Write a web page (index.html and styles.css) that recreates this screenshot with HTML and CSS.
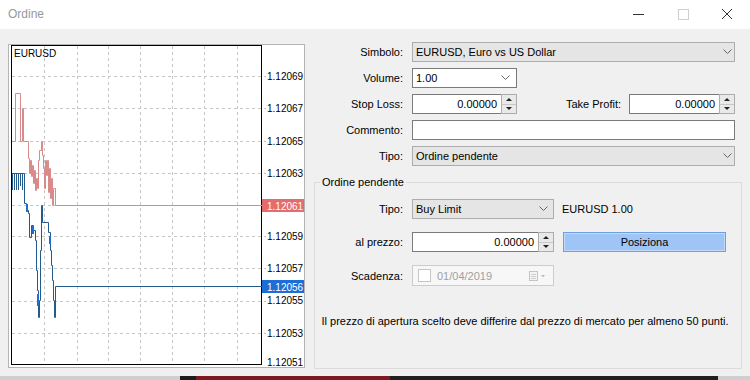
FILE: index.html
```html
<!DOCTYPE html>
<html lang="it">
<head>
  <meta charset="UTF-8">
  <title>Ordine</title>
  <link rel="stylesheet" href="styles.css">
</head>
<body>
  <div class="titlebar">
    <span class="title">Ordine</span>
    <div class="controls">
      <svg width="45" height="12" viewBox="0 0 45 12"><path d="M17 6.5H28" stroke="#333" stroke-width="1"/></svg>
      <svg width="45" height="12" viewBox="0 0 45 12"><rect x="17.5" y="1.5" width="10" height="10" fill="none" stroke="#cfcfcf"/></svg>
      <svg width="45" height="12" viewBox="0 0 45 12"><path d="M16 1L26 11M26 1L16 11" stroke="#333" stroke-width="1"/></svg>
    </div>
  </div>

  <div class="main">
    <div class="chart">
      <svg width="297" height="324" viewBox="8 44 297 324">
        <rect x="8.5" y="44.5" width="296" height="323" fill="#fff" stroke="#b4b4b4"/>
        <g stroke="#c6c6c6" stroke-dasharray="3 3" fill="none">
          <path d="M44.5 46V364M77.5 46V364M108.5 46V364M140.5 46V364M172.5 46V364M204.5 46V364M237.5 46V364"/>
          <path d="M12 76.5H266M12 108.5H266M12 141.5H266M12 173.5H266M12 205.5H266M12 236.5H266M12 268.5H266M12 301.5H266M12 333.5H266"/>
        </g>
        <rect x="11.5" y="45.5" width="250" height="319" fill="none" stroke="#000"/>
        <text x="14" y="57" class="sym">EURUSD</text>

        <!-- ask -->
        <path fill="none" stroke="#d98a8a" d="M12 141.5H15.5V93.5H20.5V141.5H22.5V108.5H23.5V141.5H28.5V158.5H29.5V173.5H30.5V160.5H31.5V176.5H32.5V165.5H33.5V183.5H34.5V170.5H35.5V190.5H36.5V178.5H37.5V188.5H38.5V160.5H39.5V150.5H41.5V141.5H42.5V155.5H43.5V168.5H44.5V188.5H45.5V160.5H46.5V175.5H47.5V160.5H48.5V192.5H49.5V168.5H50.5V198.5H51.5V178.5H52.5V205.5H53.5V188.5H55.5V205.5H262"/>
        <!-- bid -->
        <path fill="none" stroke="#235c8c" d="M12 173.5H24.5M12.5 173V190M14.5 173V190M16.5 173V190M18.5 173V190M20.5 173V186M22.5 173V190M24.5 173.5V203.5H26.5V210.5H28.5V213.5H29.5V237.5H31.5V225.5H33.5V230.5H35.5V240.5H36.5V270.5H37.5V290.5H38.5V317.5H39.5V300.5H40.5V250.5H41.5V205.5H42.5V222.5H48.5V232.5H50.5V250.5H51.5V265.5H52.5V280.5H53.5V300.5H54.5V317.5H55.5V286.5H262"/>
        <path fill="none" stroke="#1f6fd0" stroke-width="2" d="M27 204V212M33 226V234M38 294V306M50 236V244"/>

        <g class="axis">
          <text x="267" y="80">1.12069</text>
          <text x="267" y="112">1.12067</text>
          <text x="267" y="145">1.12065</text>
          <text x="267" y="177">1.12063</text>
          <text x="267" y="240">1.12059</text>
          <text x="267" y="272">1.12057</text>
          <text x="267" y="304">1.12055</text>
          <text x="267" y="337">1.12053</text>
          <text x="267" y="366">1.12051</text>
        </g>
        <rect x="262" y="199" width="42" height="13" fill="#e46c6c"/>
        <text x="267" y="209.5" class="tag">1.12061</text>
        <rect x="262" y="280" width="42" height="13" fill="#1c6ed6"/>
        <text x="267" y="290.5" class="tag">1.12056</text>
      </svg>
    </div>

    <div class="form">
      <div class="row">
        <label>Simbolo:</label>
        <div class="field grey wide">EURUSD, Euro vs US Dollar
          <svg class="chev" width="9" height="6" viewBox="0 0 9 6"><path d="M0.5 0.5L4.5 4.5L8.5 0.5" fill="none" stroke="#666"/></svg>
        </div>
      </div>
      <div class="row">
        <label>Volume:</label>
        <div class="field vol">1.00
          <svg class="chev" width="9" height="6" viewBox="0 0 9 6"><path d="M0.5 0.5L4.5 4.5L8.5 0.5" fill="none" stroke="#666"/></svg>
        </div>
      </div>
      <div class="row">
        <label>Stop Loss:</label>
        <div class="pair">
          <div class="spin">
            <div class="val">0.00000</div>
            <div class="arrows"><span class="up"></span><span class="down"></span></div>
          </div>
          <label class="tp">Take Profit:</label>
          <div class="spin tp-spin">
            <div class="val">0.00000</div>
            <div class="arrows"><span class="up"></span><span class="down"></span></div>
          </div>
        </div>
      </div>
      <div class="row">
        <label>Commento:</label>
        <div class="field"></div>
      </div>
      <div class="row">
        <label>Tipo:</label>
        <div class="field grey wide">Ordine pendente
          <svg class="chev" width="9" height="6" viewBox="0 0 9 6"><path d="M0.5 0.5L4.5 4.5L8.5 0.5" fill="none" stroke="#666"/></svg>
        </div>
      </div>

      <fieldset class="pending">
        <legend>Ordine pendente</legend>
        <div class="row">
          <label>Tipo:</label>
          <div class="pair">
            <div class="field grey short">Buy Limit
              <svg class="chev" width="9" height="6" viewBox="0 0 9 6"><path d="M0.5 0.5L4.5 4.5L8.5 0.5" fill="none" stroke="#666"/></svg>
            </div>
            <span class="info">EURUSD 1.00</span>
          </div>
        </div>
        <div class="row">
          <label>al prezzo:</label>
          <div class="pair">
            <div class="spin short">
              <div class="val">0.00000</div>
              <div class="arrows"><span class="up"></span><span class="down"></span></div>
            </div>
            <button class="place">Posiziona</button>
          </div>
        </div>
        <div class="row">
          <label>Scadenza:</label>
          <div class="field short off">
            <span class="check"></span>01/04/2019
            <svg class="cal" width="18" height="10" viewBox="0 0 18 10"><rect x="0.5" y="0.5" width="8" height="9" fill="#f4f4f4" stroke="#c4c4c4"/><path d="M2 3.5H7M2 5.5H7M2 7.5H7" stroke="#d0d0d0"/><path d="M12 4L16 4L14 6.5Z" fill="#bdbdbd"/></svg>
          </div>
        </div>
        <p class="note">Il prezzo di apertura scelto deve differire dal prezzo di mercato per almeno 50 punti.</p>
      </fieldset>
    </div>
  </div>
  <div class="strip"></div>
</body>
</html>
```

FILE: styles.css
```css
body { margin: 0; width: 750px; height: 380px; overflow: hidden; background: #f0f0f0; font-family: "Liberation Sans", Arial, sans-serif; font-size: 11px; color: #000; }

.titlebar { height: 29px; background: #fff; display: flex; align-items: center; justify-content: space-between; padding: 0 0 2px 8px; box-sizing: border-box; }
.title { font-size: 12px; color: #999; }
.controls { display: flex; margin-right: -1px; }
.controls svg { display: block; }

.main { display: flex; height: 347px; padding: 13px 8px 0; box-sizing: border-box; }
.chart { flex: none; width: 297px; height: 324px; margin-top: 2px; }
.chart svg { display: block; font-family: "Liberation Sans", Arial, sans-serif; }
.sym { font-size: 10px; fill: #000; }
.axis text { font-size: 10px; fill: #000; }
.tag { font-size: 10px; fill: #fff; }

.form { flex: 1; }
.row { display: grid; grid-template-columns: 98px 1fr; column-gap: 9px; align-items: center; height: 20px; margin-bottom: 6px; padding-right: 7px; }
.row > label { text-align: right; }

.field { height: 20px; box-sizing: border-box; border: 1px solid #7a7a7a; background: #fff; display: flex; align-items: center; padding: 0 5px 0 3px; }
.field.grey { background: #e5e5e5; border-color: #adadad; }
.field.wide { padding-right: 2px; }
.field .chev { margin-left: auto; }
.field.vol { width: 105px; padding-right: 6px; }
.field.short { width: 142px; }

.pair { display: flex; align-items: center; height: 20px; }
.spin { display: flex; width: 105px; height: 20px; }
.spin .val { flex: 1; box-sizing: border-box; border: 1px solid #7a7a7a; border-right: none; background: #fff; text-align: right; padding-right: 4px; line-height: 18px; }
.spin .arrows { width: 16px; box-sizing: border-box; border: 1px solid #adadad; background: #e9e9e9; display: flex; flex-direction: column; }
.arrows span { flex: 1; display: flex; align-items: center; justify-content: center; }
.arrows .up { border-bottom: 1px solid #c8c8c8; }
.arrows .up::before { content: ""; border: 3px solid transparent; border-bottom: 3px solid #222; border-top: none; }
.arrows .down::before { content: ""; border: 3px solid transparent; border-top: 3px solid #222; border-bottom: none; }
.tp { flex: 1; text-align: right; margin-right: 8px; }
.tp-spin { width: 106px; }
.spin.short { width: 142px; }

.pending { margin: 9px 0 0 9px; padding: 0 6px 0 0; border: 1px solid #dcdcdc; height: 194px; box-sizing: border-box; min-width: 0; }
.pending legend { padding: 0 2px; margin-left: 5px; line-height: 14px; }
.pending .row { grid-template-columns: 88px 1fr; margin-bottom: 13px; padding-right: 0; }
.pending .row:first-of-type { margin-top: 10px; }
.info { margin-left: 8px; }
.place { margin-left: 9px; width: 163px; height: 20px; padding: 0; font: inherit; color: #000; background: #9fc4f6; border: 1px solid #6f9fdc; box-shadow: inset 0 0 0 1px #c2d9fa; }

.field.off { background: #f7f7f7; border-color: #cccccc; color: #a0a0a0; padding-left: 5px; height: 21px; }
.check { width: 11px; height: 11px; border: 1px solid #c6c6c6; background: #fff; margin-right: 6px; }
.cal { margin-left: auto; margin-right: 1px; }

.note { margin: 29px 0 0; line-height: 14px; text-align: center; }

.strip { height: 4px; background: linear-gradient(to right, #cfcfcf 0 180px, #1c1c1c 180px 196px, #7a1b1f 196px 390px, #202020 390px 718px, #cfcfcf 718px); }
```
